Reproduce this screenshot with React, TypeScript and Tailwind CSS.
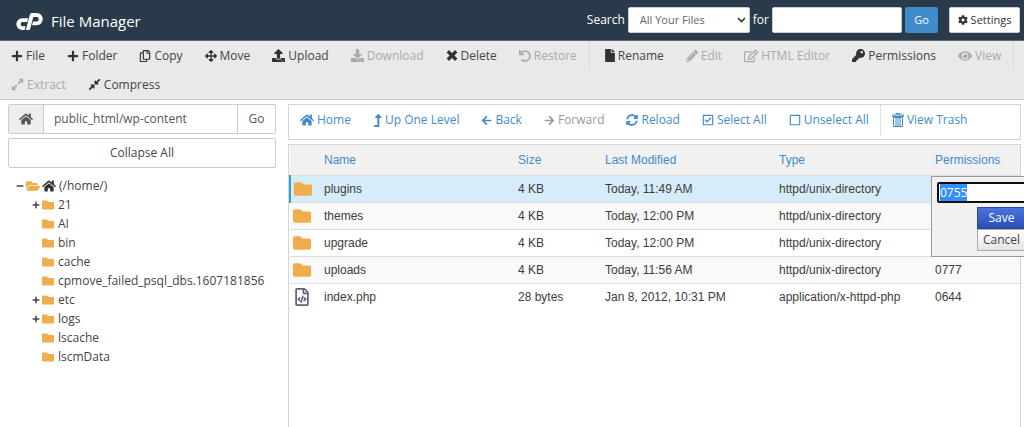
import { useEffect, useRef, type ReactNode } from "react";
import type { IconType } from "react-icons";
import {
  FaArrowLeft,
  FaArrowRight,
  FaArrowsAlt,
  FaCog,
  FaCompressAlt,
  FaDownload,
  FaExpandAlt,
  FaEye,
  FaFile,
  FaFolder,
  FaFolderOpen,
  FaHome,
  FaKey,
  FaLevelUpAlt,
  FaMinus,
  FaPencilAlt,
  FaPlus,
  FaRegCheckSquare,
  FaRegCopy,
  FaRegEdit,
  FaRegFileCode,
  FaRegSquare,
  FaSyncAlt,
  FaUndo,
  FaUpload,
} from "react-icons/fa";

type Action = { label: string; icon: ReactNode; disabled?: boolean; divider?: boolean };

const icon = (Icon: IconType, size = 13) => <Icon size={size} className="shrink-0" aria-hidden />;

const TrashIcon = () => (
  <svg width="12" height="14" viewBox="0 0 12 14" fill="none" stroke="currentColor" aria-hidden>
    <path d="M4 2V.5h4V2M.5 2h11v1.5H.5zM1.5 4.500v9h9v-9zM4 5v8M6 5v8M8 5v8" />
  </svg>
);

const Logo = () => (
  <svg width="27" height="19" viewBox="0 0 27 19" fill="#fff" aria-hidden>
    <path d="M12.200 6.300 11.200 10.100H6.700a2.100 2.100 0 0 0 0 4.200H9.600L8.600 18H6.200a5.850 5.850 0 0 1 0-11.700z" />
    <path d="M9.800 18 13.900 2.500Q14.300 1 15.900 1H20.700a6.100 6.100 0 0 1 0 12.200H16L17 9.400h3.600a2.200 2.200 0 0 0 0-4.400H17.300L14.200 16.700Q13.800 18 12.500 18z" />
  </svg>
);

const actions: Action[] = [
  { label: "File", icon: icon(FaPlus, 12) },
  { label: "Folder", icon: icon(FaPlus, 12) },
  { label: "Copy", icon: icon(FaRegCopy, 12) },
  { label: "Move", icon: icon(FaArrowsAlt, 12) },
  { label: "Upload", icon: icon(FaUpload) },
  { label: "Download", icon: icon(FaDownload), disabled: true },
  {
    label: "Delete",
    icon: (
      <svg width="12" height="13" viewBox="0 0 12 13" stroke="currentColor" strokeWidth="3.4" aria-hidden>
        <path d="m1.800 2.300 8.400 8.400M10.200 2.300l-8.400 8.400" />
      </svg>
    ),
  },
  { label: "Restore", icon: icon(FaUndo, 12), disabled: true, divider: true },
  { label: "Rename", icon: <FaFile className="h-[13px] w-[10px] shrink-0" aria-hidden /> },
  { label: "Edit", icon: icon(FaPencilAlt, 12), disabled: true },
  { label: "HTML Editor", icon: icon(FaRegEdit, 14), disabled: true },
  { label: "Permissions", icon: icon(FaKey) },
  { label: "View", icon: icon(FaEye, 14), disabled: true, divider: true },
  { label: "Extract", icon: icon(FaExpandAlt), disabled: true },
  { label: "Compress", icon: icon(FaCompressAlt) },
];

const navigation: Action[] = [
  { label: "Home", icon: icon(FaHome, 14) },
  { label: "Up One Level", icon: <FaLevelUpAlt className="h-[13px] w-[9px] shrink-0" aria-hidden /> },
  { label: "Back", icon: icon(FaArrowLeft, 11) },
  { label: "Forward", icon: icon(FaArrowRight, 11), disabled: true },
  { label: "Reload", icon: icon(FaSyncAlt, 12) },
  { label: "Select All", icon: icon(FaRegCheckSquare, 12) },
  { label: "Unselect All", icon: icon(FaRegSquare, 12), divider: true },
  { label: "View Trash", icon: <TrashIcon /> },
];

const tree = [
  { name: "21", expandable: true },
  { name: "AI" },
  { name: "bin" },
  { name: "cache" },
  { name: "cpmove_failed_psql_dbs.1607181856" },
  { name: "etc", expandable: true },
  { name: "logs", expandable: true },
  { name: "lscache" },
  { name: "lscmData" },
];

const files = [
  { name: "plugins", size: "4 KB", modified: "Today, 11:49 AM", type: "httpd/unix-directory", mode: "0755" },
  { name: "themes", size: "4 KB", modified: "Today, 12:00 PM", type: "httpd/unix-directory", mode: "0755" },
  { name: "upgrade", size: "4 KB", modified: "Today, 12:00 PM", type: "httpd/unix-directory", mode: "0755" },
  { name: "uploads", size: "4 KB", modified: "Today, 11:56 AM", type: "httpd/unix-directory", mode: "0777" },
  { name: "index.php", size: "28 bytes", modified: "Jan 8, 2012, 10:31 PM", type: "application/x-httpd-php", mode: "0644" },
];

function Header() {
  return (
    <header className="flex h-[41px] items-center justify-between border-b border-[#5b6b76] bg-[#293a4a] pr-1 pl-4 text-white">
      <div className="flex items-center gap-2 pt-[2px]">
        <Logo />
        <h1 className="text-[15px]">File Manager</h1>
      </div>
      <form className="flex items-center gap-[3px]" onSubmit={(e) => e.preventDefault()}>
        <label htmlFor="scope">Search</label>
        <div className="relative">
          <select
            id="scope"
            className="h-[26px] w-[122px] appearance-none rounded-xs border border-[#ccc] bg-white pl-[11px] text-[11px] text-[#666]"
          >
            <option>All Your Files</option>
          </select>
          <svg className="pointer-events-none absolute top-[10px] right-1" width="9" height="7" viewBox="0 0 9 7" fill="none" stroke="#333" strokeWidth="1.6" aria-hidden>
            <path d="m1 1 3.500 3.500L8 1" />
          </svg>
        </div>
        <label htmlFor="query">for</label>
        <input id="query" type="text" className="h-[26px] w-[130px] rounded-xs border border-[#ccc] bg-white px-2 text-[#555]" />
        <button className="h-[26px] w-[33px] rounded-xs bg-[#428bca] text-[11px]">Go</button>
        <button type="button" className="ml-2 flex h-[26px] w-[71px] items-center justify-center gap-[3px] rounded-xs border border-[#ccc] bg-white text-[11px] text-[#333]">
          {icon(FaCog, 10)}
          Settings
        </button>
      </form>
    </header>
  );
}

function ActionBar() {
  return (
    <div role="toolbar" aria-label="File actions" className="flex flex-wrap border-b border-[#c8c8c8] bg-[#e9e9e9]">
      {actions.map((a) => (
        <button
          key={a.label}
          disabled={a.disabled}
          className={`flex h-[29px] items-center gap-[3px] pl-[11px] text-[#333] disabled:text-[#aaa] ${a.divider ? "mr-1 border-r border-dotted border-[#ccc] pr-3" : "pr-[11px]"}`}
        >
          {a.icon}
          <span className={a.disabled ? "" : "text-[#444]"}>{a.label}</span>
        </button>
      ))}
    </div>
  );
}

function Sidebar() {
  return (
    <aside className="w-[268px] shrink-0">
      <form className="flex h-[30px] overflow-hidden rounded-xs border border-[#ccc]" onSubmit={(e) => e.preventDefault()}>
        <button type="button" aria-label="Home directory" className="flex w-[35px] items-center justify-center border-r border-[#ccc] bg-[#eee] text-[#555]">
          {icon(FaHome, 14)}
        </button>
        <input aria-label="Path" defaultValue="public_html/wp-content" className="min-w-0 flex-1 px-[10px] text-[#555]" />
        <button className="w-[38px] border-l border-[#ccc] text-[#555]">Go</button>
      </form>
      <button className="mt-1 h-[30px] w-full rounded-xs border border-[#ccc] text-[#444]">Collapse All</button>
      <ul className="mt-2 pl-2 text-[#444]">
        <li>
          <div className="flex h-[19px] items-center gap-[2px]">
            <FaMinus size={8} />
            <FaFolderOpen size={14} className="text-[#f0ad4e]" />
            <FaHome size={14} className="text-[#333]" />
            <span className="pl-px">(/home/)</span>
          </div>
          <ul className="pl-4">
            {tree.map((node) => (
              <li key={node.name} className="flex h-[19px] items-center gap-[2px]">
                <span className="w-2">{node.expandable && <FaPlus size={8} />}</span>
                <FaFolder size={12} className="text-[#f0ad4e]" />
                <span className="pl-[2px]">{node.name}</span>
              </li>
            ))}
          </ul>
        </li>
      </ul>
    </aside>
  );
}

function PermissionEditor() {
  const field = useRef<HTMLInputElement>(null);
  useEffect(() => {
    field.current?.focus({ preventScroll: true });
    field.current?.select();
  }, []);
  return (
    <form
      onSubmit={(e) => e.preventDefault()}
      className="absolute top-0 -left-1 z-10 flex w-[101px] flex-col items-end border border-[#999] bg-[#f1f1f1] p-[5px] font-['Open_Sans',sans-serif]"
    >
      <input
        ref={field}
        aria-label="Permissions for plugins"
        defaultValue="0755"
        className="h-[21px] w-full rounded-xs border-2 border-[#101010] bg-white px-px text-[12px] outline-none selection:bg-[#3390ff] selection:text-white"
      />
      <button className="mt-1 h-[22px] w-[49px] border border-[#2a4b9b] bg-linear-to-b from-[#4a74dd] to-[#2a4fb4] text-white">Save</button>
      <button type="button" className="h-[22px] w-[49px] border border-[#aaa] bg-linear-to-b from-white to-[#e4e4e4] text-[#444]">
        Cancel
      </button>
    </form>
  );
}

function FileTable() {
  return (
    <div className="mt-1 min-h-[283px] border border-b-0 border-[#d5d5d5]">
      <table className="w-full table-fixed border-collapse text-left font-['Liberation_Sans',sans-serif] text-[12px] text-[#3c3c3c]">
        <colgroup>
          <col className="w-[34px]" />
          <col className="w-[194px]" />
          <col className="w-[87px]" />
          <col className="w-[174px]" />
          <col className="w-[156px]" />
          <col />
        </colgroup>
        <thead>
          <tr className="h-[30px] border-b border-[#ddd] bg-[#f1f1f1] text-[#428bca]">
            <th aria-label="Kind" />
            {["Name", "Size", "Last Modified", "Type", "Permissions"].map((h) => (
              <th key={h} className="p-0 font-normal">
                {h}
              </th>
            ))}
          </tr>
        </thead>
        <tbody>
          {files.map((f, i) => (
            <tr
              key={f.name}
              className={`h-[27px] ${i < 4 ? "border-b border-[#ddd]" : ""} ${i === 0 ? "bg-[#d7ecf9]" : i % 2 ? "bg-[#f9f9f9]" : "bg-white"}`}
            >
              <td className={`p-0 ${i === 0 ? "border-l-2 border-l-[#36a0c9]" : ""}`}>
                <div className="pl-[3px]">
                  {f.name === "index.php" ? <FaRegFileCode size={18} className="text-[#5b6478]" /> : <FaFolder size={18} className="text-[#f0ad4e]" />}
                </div>
              </td>
              <td className="p-0">{f.name}</td>
              <td className="p-0">{f.size}</td>
              <td className="p-0">{f.modified}</td>
              <td className="p-0">{f.type}</td>
              <td className="relative p-0">
                {f.mode}
                {i === 0 && <PermissionEditor />}
              </td>
            </tr>
          ))}
        </tbody>
      </table>
    </div>
  );
}

export default function App() {
  return (
    <div className="min-h-screen overflow-clip bg-white font-['Open_Sans',sans-serif] text-[12px] leading-4">
      <Header />
      <ActionBar />
      <div className="flex gap-3 pt-1 pr-[3px] pl-2">
        <Sidebar />
        <main className="min-w-0 flex-1">
          <nav aria-label="Folder navigation" className="flex min-h-[36px] flex-wrap border border-[#d5d5d5]">
            {navigation.map((a) => (
              <button
                key={a.label}
                disabled={a.disabled}
                className={`flex h-[30px] items-center gap-[3px] px-[11px] text-[#428bca] disabled:text-[#999] ${a.divider ? "border-r border-dotted border-[#ccc]" : ""}`}
              >
                {a.icon}
                {a.label}
              </button>
            ))}
          </nav>
          <FileTable />
        </main>
      </div>
    </div>
  );
}
